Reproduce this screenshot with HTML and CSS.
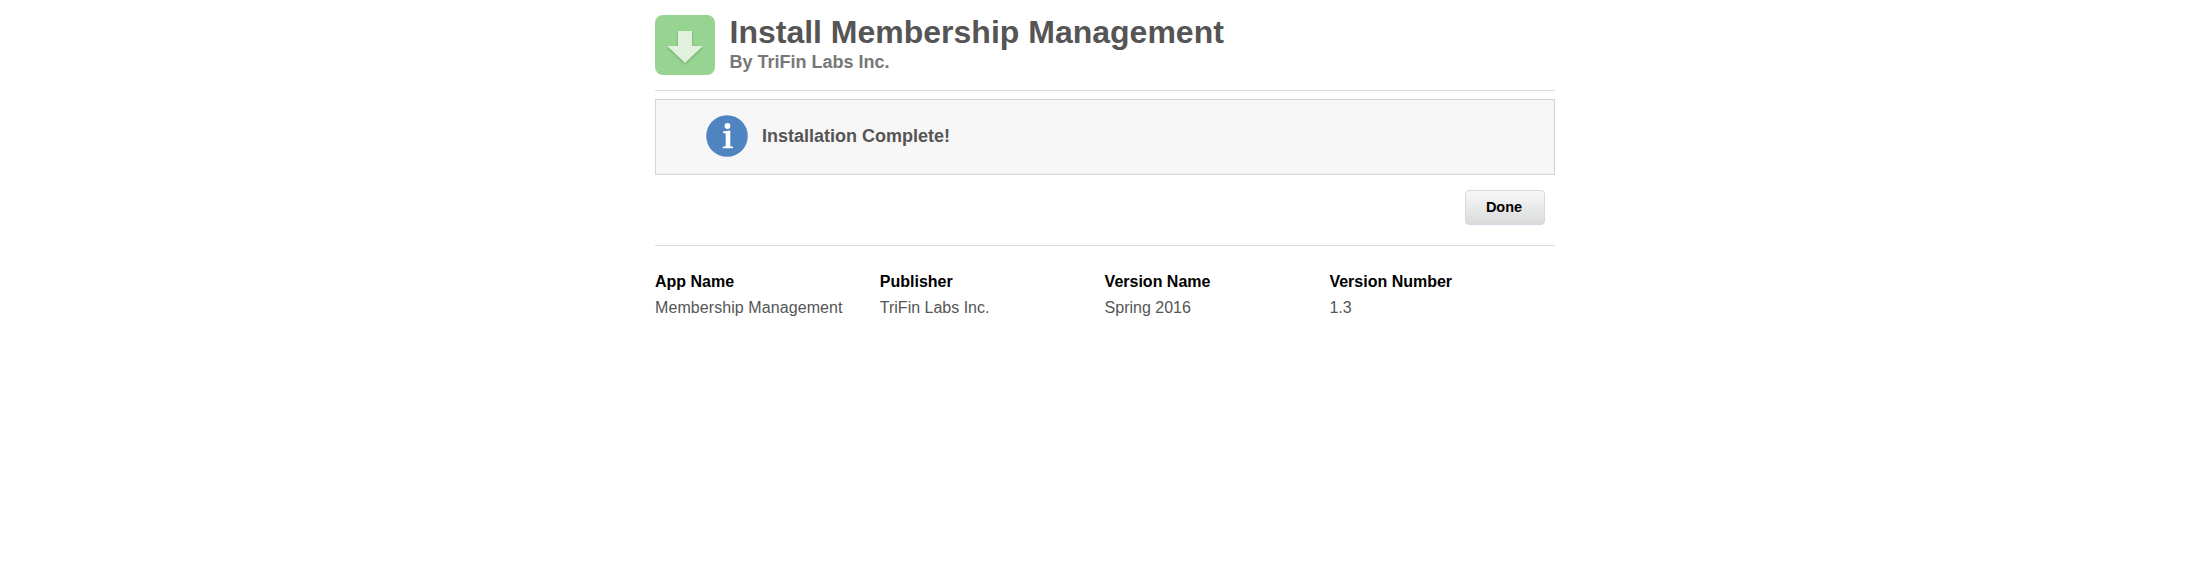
FILE: index.html
```html
<!DOCTYPE html>
<html lang="en">
<head>
<meta charset="utf-8">
<title>Install Membership Management</title>
<link rel="stylesheet" href="styles.css">
</head>
<body>
<main class="page">
  <header class="header">
    <svg class="app-icon" viewBox="0 0 60 60" aria-hidden="true">
      <rect width="60" height="60" rx="8" fill="#98d491"/>
      <path class="arrow" d="M23 16h14v15h11L30 48 12 31h11z" fill="#e0f1de"/>
    </svg>
    <div class="heading">
      <h1 class="title">Install Membership Management</h1>
      <p class="publisher">By TriFin Labs Inc.</p>
    </div>
  </header>
  <section class="notice">
    <svg class="info-icon" viewBox="0 0 42 42" aria-hidden="true">
      <circle cx="21" cy="21" r="20.8" fill="#4f84c1"/>
      <circle cx="21.5" cy="11" r="2.9" fill="#fff"/>
      <path d="M17 16.4l7.3-.8v15.7l2.7.5v1.5H16.8v-1.5l2.9-.5V18.6l-2.7-.6z" fill="#fff"/>
    </svg>
    <span class="message">Installation Complete!</span>
  </section>
  <div class="actions"><button class="done">Done</button></div>
  <dl class="details">
    <div class="detail"><dt class="label">App Name</dt><dd class="value wide">Membership Management</dd></div>
    <div class="detail"><dt class="label">Publisher</dt><dd class="value">TriFin Labs Inc.</dd></div>
    <div class="detail"><dt class="label">Version Name</dt><dd class="value">Spring 2016</dd></div>
    <div class="detail"><dt class="label">Version Number</dt><dd class="value">1.3</dd></div>
  </dl>
</main>
</body>
</html>
```
FILE: styles.css
```css
body { margin: 0; background: #fff; font-family: "Liberation Sans", Arial, sans-serif; }
.page { width: 900px; margin-left: 655px; padding-top: 15px; }
.header { display: flex; gap: 14.5px; height: 75px; border-bottom: 1px solid #dbdbdb; }
.app-icon { width: 60px; height: 60px; flex: none; }
.arrow { filter: drop-shadow(0 1px 1px rgba(50, 110, 45, .5)); }
.title { margin: 0; font-size: 32px; line-height: 35px; color: #555; white-space: nowrap; }
.publisher { margin: 0; padding-top: 1px; font-size: 18px; line-height: 22px; font-weight: bold; color: #777; }
.notice { box-sizing: border-box; display: flex; align-items: center; gap: 14px; height: 76px; margin-top: 8px; padding: 0 0 2px 50px; background: #f7f7f7; border: 1px solid #d6d6d6; box-shadow: inset 0 0 1px #eaeaea; }
.info-icon { width: 42px; height: 42px; }
.message { font-size: 18px; font-weight: bold; color: #555; }
.actions { display: flex; justify-content: flex-end; padding: 15px 10px 20px; border-bottom: 1px solid #dbdbdb; }
.done { width: 80px; height: 35px; padding: 0 2px 2px 0; border: 1px solid #d3d9e3; border-radius: 4px; background: linear-gradient(#f8f8f8, #d9dadb); font: bold 14.5px "Liberation Sans", Arial, sans-serif; color: #000; }
.details { display: grid; grid-template-columns: repeat(4, 224.8px); margin: 26px 0 0; font-size: 16px; }
.label { height: 26px; line-height: 20px; font-weight: bold; color: #000; }
.value { height: 18px; margin: 0; line-height: 20px; color: #555; overflow: hidden; }
.wide { letter-spacing: .08px; }
```
